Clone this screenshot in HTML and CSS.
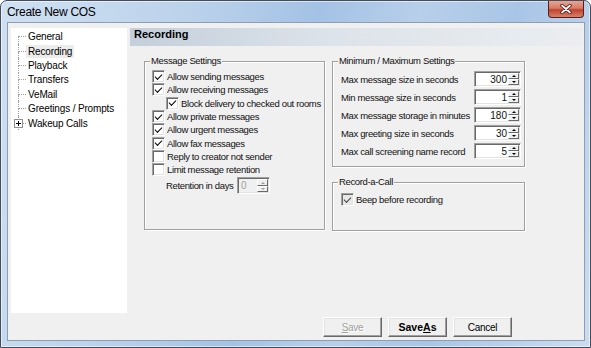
FILE: index.html
```html
<!DOCTYPE html>
<html lang="en">
<head>
  <meta charset="UTF-8">
  <title>Create New COS</title>
  <link rel="stylesheet" href="styles.css">
</head>
<body>
  <div class="window">
    <!-- Title bar -->
    <div class="titlebar">
      <span class="title">Create New COS</span>
      <span class="close">
        <svg width="12" height="10" viewBox="0 0 12 10">
          <path d="M2 1.5 L10 8.5 M10 1.5 L2 8.5" stroke="#4a1410" stroke-width="3.4" stroke-linecap="round"/>
          <path d="M2 1.5 L10 8.5 M10 1.5 L2 8.5" stroke="#fff" stroke-width="1.7" stroke-linecap="round"/>
        </svg>
      </span>
    </div>

    <div class="client">
      <div class="main">
        <!-- Category tree -->
        <ul class="tree">
          <li class="node first"><span class="guide"><i></i><i></i></span><span class="label">General</span></li>
          <li class="node selected"><span class="guide"><i></i><i></i></span><span class="label">Recording</span></li>
          <li class="node"><span class="guide"><i></i><i></i></span><span class="label">Playback</span></li>
          <li class="node"><span class="guide"><i></i><i></i></span><span class="label">Transfers</span></li>
          <li class="node"><span class="guide"><i></i><i></i></span><span class="label">VeMail</span></li>
          <li class="node"><span class="guide"><i></i><i></i></span><span class="label">Greetings / Prompts</span></li>
          <li class="node last">
            <span class="guide"><i></i><i></i>
              <svg class="expander" width="9" height="9" viewBox="0 0 9 9">
                <rect x="0.5" y="0.5" width="8" height="8" fill="#fff" stroke="#919191"/>
                <path d="M2 4.5h5M4.5 2v5" stroke="#000"/>
              </svg>
            </span><span class="label">Wakeup Calls</span>
          </li>
        </ul>

        <!-- Settings page -->
        <section class="page">
          <h1 class="page-title">Recording</h1>
          <div class="page-body">
            <fieldset class="group group-msg">
              <legend>Message Settings</legend>
              <div class="row"><span class="cb checked"></span>Allow sending messages</div>
              <div class="row"><span class="cb checked"></span>Allow receiving messages</div>
              <div class="row indent"><span class="cb checked"></span>Block delivery to checked out rooms</div>
              <div class="row"><span class="cb checked"></span>Allow private messages</div>
              <div class="row"><span class="cb checked"></span>Allow urgent messages</div>
              <div class="row"><span class="cb checked"></span>Allow fax messages</div>
              <div class="row"><span class="cb"></span>Reply to creator not sender</div>
              <div class="row"><span class="cb"></span>Limit message retention</div>
              <div class="row retention">
                <span class="retention-label">Retention in days</span>
                <span class="spin disabled"><span class="spin-val">0</span><span class="spin-btns"><i class="up"></i><i class="down"></i></span></span>
              </div>
            </fieldset>

            <div class="col">
              <fieldset class="group group-minmax">
                <legend>Minimum / Maximum Settings</legend>
                <div class="field"><span class="field-label">Max message size in seconds</span><span class="spin"><span class="spin-val">300</span><span class="spin-btns"><i class="up"></i><i class="down"></i></span></span></div>
                <div class="field"><span class="field-label">Min message size in seconds</span><span class="spin"><span class="spin-val">1</span><span class="spin-btns"><i class="up"></i><i class="down"></i></span></span></div>
                <div class="field"><span class="field-label">Max message storage in minutes</span><span class="spin"><span class="spin-val">180</span><span class="spin-btns"><i class="up"></i><i class="down"></i></span></span></div>
                <div class="field"><span class="field-label">Max greeting size in seconds</span><span class="spin"><span class="spin-val">30</span><span class="spin-btns"><i class="up"></i><i class="down"></i></span></span></div>
                <div class="field"><span class="field-label">Max call screening name record</span><span class="spin"><span class="spin-val">5</span><span class="spin-btns"><i class="up"></i><i class="down"></i></span></span></div>
              </fieldset>

              <fieldset class="group group-rac">
                <legend>Record-a-Call</legend>
                <div class="row"><span class="cb checked dim"></span>Beep before recording</div>
              </fieldset>
            </div>
          </div>
        </section>
      </div>

      <!-- Dialog buttons -->
      <div class="buttons">
        <button class="btn" disabled><u>S</u>ave</button>
        <button class="btn default">Save<u>A</u>s</button>
        <button class="btn">Cancel</button>
      </div>
    </div>
  </div>
</body>
</html>
```

FILE: styles.css
```css
* {
  box-sizing: border-box;
}
body {
  margin: 0;
  font-family: "Liberation Sans", Arial, sans-serif;
  color: #000;
}
/* Window frame */
.window {
  width: 591px;
  height: 348px;
  border: 1px solid #434d5c;
  border-radius: 7px 7px 0 0;
  padding: 0 5px 6px 6px;
  display: flex;
  flex-direction: column;
  background: linear-gradient(105deg, #cfe0f2 0%, #bcd2eb 28%, #a4c2e5 47%, #b8cfea 62%, #a9c5e6 76%, #cbdcf0 100%);
  box-shadow: inset 0 0 0 1px rgba(255, 255, 255, 0.55);
}
.titlebar {
  height: 21px;
  display: flex;
  align-items: center;
}
.title {
  font-size: 12px;
  letter-spacing: -0.3px;
}
.close {
  margin-left: auto;
  margin-right: 1px;
  align-self: flex-start;
  width: 36px;
  height: 17px;
  display: flex;
  align-items: center;
  justify-content: center;
  border: 1px solid #5b1d15;
  border-top: none;
  border-radius: 0 0 4px 4px;
  background: linear-gradient(#e8a596, #d67a65 45%, #c1432c 55%, #d8806a);
}
/* Client area */
.client {
  flex: 1;
  display: flex;
  flex-direction: column;
  border: 1px solid #8d9db2;
  background: #f0f0f0;
  padding: 5px 2px 3px 3px;
  font: 9.5px "Liberation Sans", Arial, sans-serif;
  letter-spacing: -0.35px;
  color: #111;
}
.main {
  height: 285px;
  display: grid;
  grid-template-columns: 116px 1fr;
  gap: 3px;
}
/* Tree */
.tree {
  margin: 0;
  padding: 1.5px 0 0 7px;
  list-style: none;
  background: #fff;
  font: 10px "Liberation Sans", Arial, sans-serif;
  letter-spacing: -0.15px;
  color: #000;
}
.node {
  height: 14.4px;
  display: flex;
}
.guide {
  position: relative;
  width: 8px;
  display: flex;
  flex-direction: column;
}
.guide i {
  display: block;
  flex: 1;
  border-left: 1px dotted #a0a0a0;
}
.guide i:first-child {
  border-bottom: 1px dotted #a0a0a0;
}
.first .guide i:first-child,
.last .guide i:last-child {
  border-left: none;
}
.expander {
  position: absolute;
  left: -4px;
  top: 2.7px;
}
.label {
  align-self: center;
  height: 13px;
  line-height: 13px;
  padding: 0 2px;
  white-space: nowrap;
}
.selected .label {
  background: #ececec;
}
/* Page */
.page {
  display: flex;
  flex-direction: column;
}
.page-title {
  margin: 0;
  height: 18px;
  line-height: 18px;
  padding-left: 4px;
  font: bold 11px "Liberation Sans", Arial, sans-serif;
  letter-spacing: 0;
  color: #000;
  background: linear-gradient(to right, #c4cfdb, #dde3ea 45%, #ebedf0);
}
.page-body {
  display: flex;
  align-items: flex-start;
  gap: 7px;
  padding: 9px 0 0 14px;
}
.col {
  display: flex;
  flex-direction: column;
  gap: 9px;
}
.group {
  margin: 0;
  min-width: 0;
  border: 1px solid #a0a0a0;
  box-shadow: inset 1px 1px 0 #fff, 1px 1px 0 #fff;
}
.group legend {
  padding: 0 1px;
  line-height: 12px;
  background: #f0f0f0;
}
.group-msg {
  width: 181px;
  height: 175px;
  padding: 3px 0 0 7px;
}
.group-msg legend {
  margin-left: -2px;
}
.group-minmax {
  width: 193px;
  height: 112px;
  padding: 4px 3px 0 8px;
  display: flex;
  flex-direction: column;
  gap: 2px;
}
.group-rac {
  width: 193px;
  height: 55px;
  padding: 5px 0 0 8px;
}
.group-minmax legend,
.group-rac legend {
  margin-left: -3px;
}
/* Checkbox rows */
.row {
  height: 13.3px;
  display: flex;
  align-items: center;
  gap: 2px;
  white-space: nowrap;
}
.row.indent {
  padding-left: 14px;
}
.cb {
  width: 13px;
  height: 13px;
  flex: none;
  display: flex;
  align-items: center;
  justify-content: center;
  background: #fff;
  border: 1px solid;
  border-color: #a0a0a0 #fff #fff #a0a0a0;
  box-shadow: inset 1px 1px 0 #696969, inset -1px -1px 0 #e3e3e3;
}
.cb.checked::before {
  content: "";
  width: 6px;
  height: 3px;
  margin-top: -2px;
  border-left: 1.6px solid #000;
  border-bottom: 1.6px solid #000;
  transform: rotate(-45deg);
}
.cb.dim {
  background: #e8e8e8;
}
.cb.dim::before {
  border-color: #444;
}
.retention {
  height: 17px;
  margin-top: 1px;
  padding-left: 14px;
}
.retention-label {
  width: 69px;
}
/* Spin boxes */
.field {
  height: 16px;
  display: flex;
  align-items: center;
  white-space: nowrap;
}
.field-label {
  flex: 1;
}
.spin {
  width: 47px;
  height: 16px;
  display: flex;
  padding: 2px;
  background: #fff;
  border: 1px solid;
  border-color: #a0a0a0 #fff #fff #a0a0a0;
  box-shadow: inset 1px 1px 0 #696969, inset -1px -1px 0 #e3e3e3;
}
.spin-val {
  flex: 1;
  text-align: right;
  padding-right: 1px;
  line-height: 11px;
  font-size: 10px;
  letter-spacing: 0;
}
.spin-btns {
  width: 11px;
  display: flex;
  flex-direction: column;
  margin: -1px -1px -1px 0;
}
.spin-btns i {
  flex: 1;
  display: flex;
  align-items: center;
  justify-content: center;
  background: #f0f0f0;
  border: 1px solid;
  border-color: #fff #696969 #696969 #fff;
}
.spin-btns i::before {
  content: "";
  border-left: 2px solid transparent;
  border-right: 2px solid transparent;
}
.spin-btns .up::before {
  border-bottom: 2px solid #000;
}
.spin-btns .down::before {
  border-top: 2px solid #000;
}
.spin.disabled {
  width: 33px;
  height: 17px;
  background: #f0f0f0;
}
.spin.disabled .spin-val {
  text-align: left;
  padding-left: 1px;
  color: #a0a0a0;
}
.spin.disabled .spin-btns i::before {
  border-bottom-color: #a0a0a0;
  border-top-color: #a0a0a0;
}
/* Dialog buttons */
.buttons {
  margin-top: 4px;
  display: flex;
  justify-content: flex-end;
  gap: 6px;
  padding-right: 70px;
}
.btn {
  width: 59px;
  height: 20px;
  padding: 0;
  font: 10px "Liberation Sans", Arial, sans-serif;
  letter-spacing: -0.3px;
  color: #000;
  background: #f0f0f0;
  border: 1px solid;
  border-color: #fff #696969 #696969 #fff;
  box-shadow: inset -1px -1px 0 #a0a0a0, inset 1px 1px 0 #e3e3e3;
}
.btn:disabled {
  color: #a0a0a0;
  text-shadow: 1px 1px 0 #fff;
}
.btn.default {
  font: bold 10.5px "Liberation Sans", Arial, sans-serif;
  letter-spacing: 0;
}
```
